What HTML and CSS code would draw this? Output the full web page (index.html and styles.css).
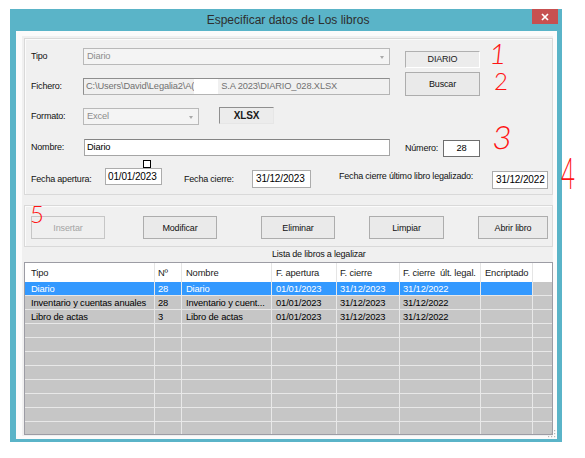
FILE: index.html
```html
<!DOCTYPE html>
<html lang="es">
<head>
<meta charset="utf-8">
<title>Especificar datos de Los libros</title>
<link rel="stylesheet" href="styles.css">
</head>
<body>
<div class="window">
  <div class="titlebar">
    <span class="title">Especificar datos de Los libros</span>
    <span class="close"><svg width="8" height="8" viewBox="0 0 8 8"><path d="M1 1L7 7M7 1L1 7" stroke="#fff" stroke-width="1.7"/></svg></span>
  </div>
  <div class="frame">
    <div class="client">
      <div class="group g1">
        <div class="row ra">
          <span class="lbl w52">Tipo</span>
          <div class="combo c-tipo"><span>Diario</span><i class="arrow"></i></div>
          <div class="box b-diario">DIARIO</div>
        </div>
        <div class="row rb">
          <span class="lbl w52 mt6">Fichero:</span>
          <div class="field ro f-fichero">C:\Users\David\Legalia2\A(<span class="redact"></span>S.A 2023\DIARIO_028.XLSX</div>
          <button class="btn b-buscar">Buscar</button>
        </div>
        <div class="row rc">
          <span class="lbl w52 mt1">Formato:</span>
          <div class="combo c-excel"><span>Excel</span><i class="arrow"></i></div>
          <div class="box b-xlsx">XLSX</div>
        </div>
        <div class="row rd">
          <span class="lbl w53">Nombre:</span>
          <div class="field f-nombre">Diario</div>
          <span class="lbl l-numero">Número:</span>
          <div class="field f-num">28</div>
        </div>
        <div class="row re">
          <span class="lbl l-fa">Fecha apertura:</span>
          <div class="date d1">01/01/2023</div>
          <span class="lbl l-fc">Fecha cierre:</span>
          <div class="date d2">31/12/2023</div>
          <span class="lbl l-fu">Fecha cierre último libro legalizado:</span>
          <div class="date d3">31/12/2022</div>
        </div>
      </div>

      <div class="group g2">
        <button class="btn b-ins" disabled>Insertar</button>
        <button class="btn b-mod">Modificar</button>
        <button class="btn b-eli">Eliminar</button>
        <button class="btn b-lim">Limpiar</button>
        <button class="btn b-abr">Abrir libro</button>
      </div>

      <div class="caption">Lista de libros a legalizar</div>

      <div class="grid">
        <div class="hdr">
          <span class="p6">Tipo</span><span class="p3">Nº</span><span>Nombre</span><span>F. apertura</span><span class="p3">F. cierre</span><span class="p3">F. cierre&nbsp; últ. legal.</span><span>Encriptado</span><span></span>
        </div>
        <div class="tr sel">
          <span class="p6">Diario</span><span class="p3">28</span><span>Diario</span><span>01/01/2023</span><span class="p3">31/12/2023</span><span class="p3">31/12/2022</span><span></span><span class="filler"></span>
        </div>
        <div class="tr">
          <span class="p6">Inventario y cuentas anuales</span><span class="p3">28</span><span>Inventario y cuent...</span><span>01/01/2023</span><span class="p3">31/12/2023</span><span class="p3">31/12/2022</span><span></span><span></span>
        </div>
        <div class="tr">
          <span class="p6">Libro de actas</span><span class="p3">3</span><span>Libro de actas</span><span>01/01/2023</span><span class="p3">31/12/2023</span><span class="p3">31/12/2022</span><span></span><span></span>
        </div>
        <div class="tr"><span></span><span></span><span></span><span></span><span></span><span></span><span></span><span></span></div>
        <div class="tr"><span></span><span></span><span></span><span></span><span></span><span></span><span></span><span></span></div>
        <div class="tr"><span></span><span></span><span></span><span></span><span></span><span></span><span></span><span></span></div>
        <div class="tr"><span></span><span></span><span></span><span></span><span></span><span></span><span></span><span></span></div>
        <div class="tr"><span></span><span></span><span></span><span></span><span></span><span></span><span></span><span></span></div>
        <div class="tr"><span></span><span></span><span></span><span></span><span></span><span></span><span></span><span></span></div>
        <div class="tr"><span></span><span></span><span></span><span></span><span></span><span></span><span></span><span></span></div>
        <div class="tr"><span></span><span></span><span></span><span></span><span></span><span></span><span></span><span></span></div>
      </div>
    </div>
    <svg class="grip" width="8" height="8" viewBox="0 0 8 8"><g fill="#b5b5b5"><rect x="6" y="0" width="1.2" height="1.2"/><rect x="6" y="3" width="1.2" height="1.2"/><rect x="6" y="6" width="1.2" height="1.2"/><rect x="3" y="3" width="1.2" height="1.2"/><rect x="3" y="6" width="1.2" height="1.2"/><rect x="0" y="6" width="1.2" height="1.2"/></g></svg>
  </div>
</div>

<span class="handle"></span>

<span class="note n1">1</span>
<span class="note n2">2</span>
<span class="note n3">3</span>
<span class="note n4">4</span>
<span class="note n5">5</span>
</body>
</html>
```

FILE: styles.css
```css
* { box-sizing: border-box; }

html, body {
  margin: 0;
  padding: 0;
}

body {
  position: relative;
  width: 585px;
  height: 458px;
  overflow: hidden;
  background: #ffffff;
  font-family: "Liberation Sans", Arial, sans-serif;
  color: #000;
}

/* window chrome */
.window {
  width: 552px;
  height: 433px;
  margin: 9px 0 0 10px;
  background: #5ab4c8;
  display: flex;
  flex-direction: column;
}

.titlebar {
  position: relative;
  height: 22px;
  display: flex;
  align-items: center;
  justify-content: center;
}

.title {
  font-size: 12px;
  color: #2e2e2e;
  padding-left: 4px;
}

.close {
  position: absolute;
  right: 4px;
  top: 0;
  width: 26px;
  height: 15px;
  background: #c75050;
  display: flex;
  align-items: center;
  justify-content: center;
}

.close svg { display: block; }

.frame {
  position: relative;
  flex: 1;
  margin: 0 5px 3px 6px;
  background: #fbfbfb;
  padding: 5px 4px 3px 6px;
}

.grip {
  position: absolute;
  right: 1px;
  bottom: 1px;
}

.client {
  height: 400px;
  background: #f0f0f0;
  padding: 2px 0 1px 2px;
  display: flex;
  flex-direction: column;
}

/* group boxes */
.group {
  border: 1px solid #d9d9d9;
  box-shadow: inset 1px 1px 0 #fbfbfb;
}

.g1 {
  height: 157px;
  padding: 9px 0 0 6px;
}

.g2 {
  height: 42px;
  margin-top: 10px;
  padding: 10px 0 0 6px;
  display: flex;
  align-items: flex-start;
}

.row {
  display: flex;
  align-items: flex-start;
}

.ra { height: 20px; }
.rb { height: 24px; margin-top: 4px; }
.rc { height: 19px; margin-top: 11px; }
.rd { height: 18px; margin-top: 13px; }
.re { height: 21px; margin-top: 11px; }

/* labels */
.lbl {
  font-size: 9px;
  letter-spacing: -0.2px;
  line-height: 17px;
  height: 17px;
  white-space: nowrap;
  color: #111;
}

.w52 { width: 52px; }
.w53 { width: 53px; }
.mt1 { margin-top: 1px; }
.mt6 { margin-top: 6px; }

.l-numero { width: 38px; margin-left: 15px; margin-top: 1px; }
.l-fa { width: 74px; margin-top: 3px; }
.l-fc { width: 68px; margin-left: 22px; margin-top: 3px; }
.l-fu { width: 153px; margin-left: 28px; }

/* combos */
.combo {
  position: relative;
  height: 17px;
  border: 1px solid #b9b9b9;
  background: #f4f4f4;
  color: #8c8c8c;
  font-size: 9.3px;
  letter-spacing: -0.15px;
  line-height: 15px;
  padding-left: 3px;
}

.c-tipo { width: 307px; }
.c-excel { width: 116px; margin-top: 1px; }

.arrow {
  position: absolute;
  right: 5px;
  top: 7px;
  width: 0;
  height: 0;
  border-left: 2.5px solid transparent;
  border-right: 2.5px solid transparent;
  border-top: 3px solid #a9a9a9;
}

/* boxes (labels with sunken border) */
.box {
  height: 17px;
  border: 1px solid;
  border-color: #b0b0b0 #ffffff #ffffff #b0b0b0;
  background: #ececec;
  text-align: center;
  line-height: 15px;
  color: #1a1a1a;
}

.b-diario {
  width: 75px;
  margin-left: 15px;
  margin-top: 3px;
  font-size: 9px;
  letter-spacing: -0.2px;
}

.b-xlsx {
  width: 55px;
  margin-left: 20px;
  font-size: 10px;
  font-weight: bold;
  letter-spacing: -0.1px;
  border-color: #8f8f8f #e6e6e6 #e6e6e6 #8f8f8f;
}

/* text fields */
.field {
  height: 17px;
  border: 1px solid #a5a5a5;
  border-top-color: #848484;
  background: #ffffff;
  font-size: 9.3px;
  letter-spacing: -0.15px;
  line-height: 15px;
  padding-left: 2px;
  white-space: nowrap;
  overflow: hidden;
}

.ro {
  background: #f0f0f0;
  color: #707070;
  border-color: #8e8e8e #b4b4b4 #b4b4b4 #8e8e8e;
}

.f-fichero { width: 307px; margin-top: 6px; }

.redact {
  display: inline-block;
  width: 24px;
  height: 15px;
  vertical-align: top;
  background: #ffffff;
  margin-right: 3px;
}

.f-nombre { width: 306px; color: #000; }

.f-num {
  width: 37px;
  margin-top: 1px;
  text-align: center;
  padding-left: 0;
  border: 1px solid #6e6e6e;
}

/* dates */
.date {
  height: 17px;
  border: 1px solid #acacac;
  background: #ffffff;
  font-size: 10px;
  letter-spacing: -0.15px;
  line-height: 15px;
  padding-left: 2px;
  white-space: nowrap;
}

.d1 { width: 57px; }
.d2 { width: 59px; height: 18px; margin-top: 2px; padding-left: 3px; line-height: 16px; }
.d3 { width: 56px; height: 18px; margin-top: 3px; padding-left: 3px; line-height: 16px; }

/* buttons */
.btn {
  height: 23px;
  margin: 0;
  padding: 0;
  border: 1px solid #adadad;
  background: #eaeaea;
  font-family: "Liberation Sans", Arial, sans-serif;
  font-size: 9px;
  letter-spacing: -0.15px;
  color: #111;
  text-align: center;
}

.btn:disabled {
  color: #a4a4a4;
  border-color: #c6c6c6;
  background: #efefef;
}

.b-buscar { width: 75px; height: 24px; margin-left: 15px; }
.b-ins { width: 74px; }
.b-mod { width: 74px; margin-left: 38px; }
.b-eli { width: 74px; margin-left: 44px; }
.b-lim { width: 75px; margin-left: 34px; }
.b-abr { width: 70px; margin-left: 34px; }

/* caption */
.caption {
  height: 15px;
  padding-left: 248px;
  font-size: 9px;
  letter-spacing: -0.2px;
  line-height: 15px;
  color: #111;
  white-space: nowrap;
}

/* data grid */
.grid {
  width: 529px;
  height: 173px;
  border: 1px solid #9c9ca4;
  background: #c6c6c6;
  overflow: hidden;
}

.hdr, .tr {
  display: grid;
  grid-template-columns: 130px 27px 90px 65px 63px 81px 52px 19px;
}

.hdr {
  height: 19px;
  background: #ffffff;
}

.hdr span, .tr span {
  font-size: 9.4px;
  letter-spacing: -0.15px;
  white-space: nowrap;
  overflow: hidden;
  padding-left: 4px;
}

.hdr span {
  line-height: 19px;
  border-right: 1px solid #e5e5e5;
  color: #1a1a1a;
}

.hdr span:last-child { border-right: none; }

.tr {
  height: 14px;
  border-bottom: 1px solid #e8e8e8;
}

.tr span {
  line-height: 13px;
  border-right: 1px solid #e8e8e8;
  background: #c6c6c6;
  color: #000;
}

.tr span:last-child { border-right: none; }

.tr.sel span {
  background: #3399ff;
  color: #ffffff;
}

.tr.sel span.filler {
  background: #c6c6c6;
}

.hdr span.p6, .tr span.p6 { padding-left: 6px; }
.hdr span.p3, .tr span.p3 { padding-left: 3px; }

/* overlays */
.handle {
  position: absolute;
  left: 143px;
  top: 160px;
  width: 8px;
  height: 8px;
  border: 1px solid #000;
  background: #fff;
}

.note {
  position: absolute;
  font-family: Lato, "DejaVu Sans", sans-serif;
  font-weight: 300;
  color: #ff1414;
  line-height: 1;
  white-space: nowrap;
}

.n1 { left: 490px; top: 39px; font-size: 28px; transform: skewX(-6deg); }
.n2 { left: 494px; top: 69px; font-size: 24px; }
.n3 { left: 493px; top: 121px; font-size: 32px; transform: skewX(-6deg); }
.n4 { left: 561px; top: 150px; font-size: 44px; transform: scaleX(0.55); transform-origin: left top; }
.n5 { left: 30px; top: 202px; font-size: 24px; }
```
